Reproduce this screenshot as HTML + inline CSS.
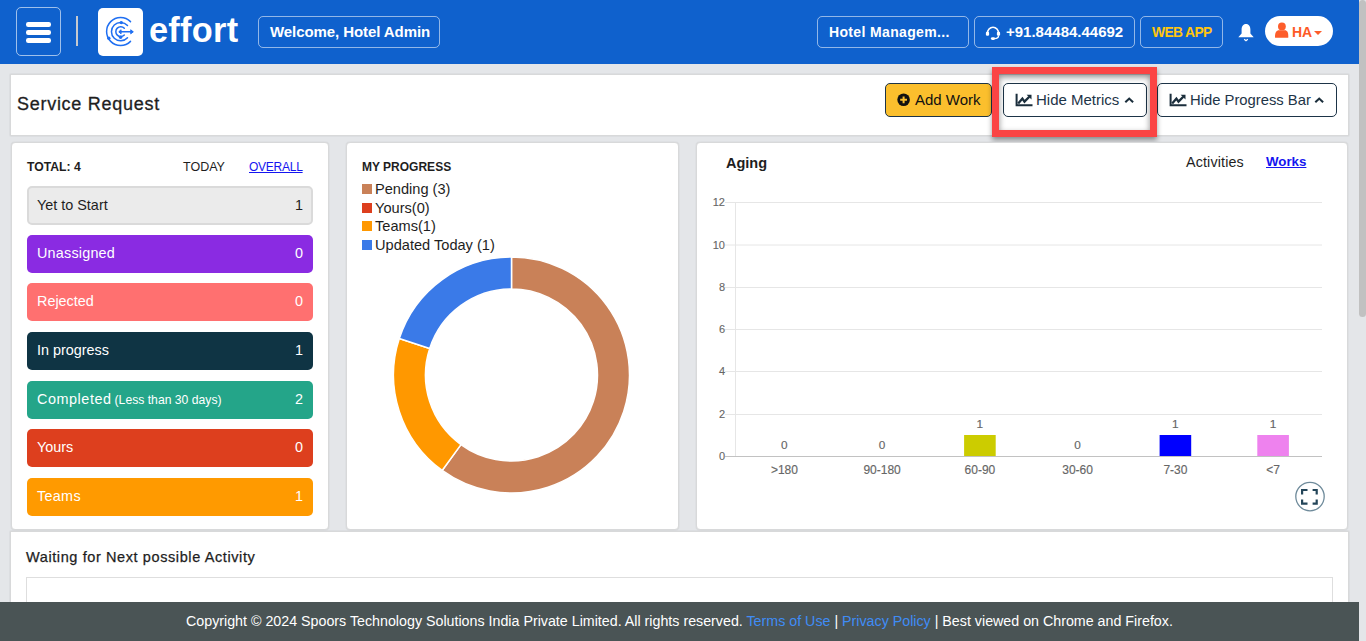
<!DOCTYPE html>
<html><head><meta charset="utf-8">
<style>
*{box-sizing:border-box;margin:0;padding:0}
html,body{width:1366px;height:641px;overflow:hidden;background:#e4e6e9;font-family:"Liberation Sans",sans-serif}
.abs{position:absolute}
.hdr{position:absolute;left:0;top:0;width:1359px;height:64px;background:#0f61cd}
.hbtn{position:absolute;border:1px solid rgba(255,255,255,.55);border-radius:5px;color:#fff;font-weight:700;white-space:nowrap}
.card{position:absolute;background:#fff;border:1px solid #d8d9da;border-radius:4px;box-shadow:0 0 1.5px rgba(0,0,0,.12)}
.bar{position:absolute;left:27px;width:286px;height:38px;border-radius:5px;color:#fff;font-size:14.4px;white-space:nowrap}
.bar .l{position:absolute;left:10px;top:9.8px}
.bar .r{position:absolute;right:10px;top:9.8px}
.sb{position:absolute;left:1359px;top:0;width:7px;height:641px;background:#e4e6e9}
.thumb{position:absolute;left:1359px;top:0;width:7px;height:317px;background:#c1c1c1;border-radius:4px}
.footer{position:absolute;left:0;top:602px;width:1359px;height:39px;background:#4a5455;color:#fff;font-size:14.26px;white-space:nowrap}
.ob{position:absolute;top:83px;height:34px;border:1px solid #1d3447;border-radius:5px;background:#fff;color:#1d3447;font-size:15px;white-space:nowrap}
</style></head><body>

<!-- HEADER -->
<div class="hdr"></div>
<div class="abs" style="left:16px;top:7px;width:45px;height:49px;border:1px solid rgba(255,255,255,.6);border-radius:5px"></div>
<div class="abs" style="left:26px;top:22px;width:25px;height:5px;background:#fff;border-radius:2.2px"></div>
<div class="abs" style="left:26px;top:30px;width:25px;height:5px;background:#fff;border-radius:2.2px"></div>
<div class="abs" style="left:26px;top:38px;width:25px;height:5px;background:#fff;border-radius:2.2px"></div>
<div class="abs" style="left:76px;top:16px;width:2px;height:30px;background:#c5c9cf"></div>
<div class="abs" style="left:98px;top:8px;width:45px;height:48px;background:#fff;border-radius:5px"></div>
<svg class="abs" style="left:98px;top:8px" width="45" height="48" viewBox="0 0 45 48" fill="none" stroke="#1f6ff2" stroke-width="1.5" stroke-linecap="round">
<path d="M32.5 13.6A14 14 0 1 0 32.5 33.4"/>
<path d="M29.5 17.5A9.2 9.2 0 1 0 29.5 29.8"/>
<path d="M26.3 20.3A4.9 4.9 0 1 0 26.3 27"/>
<path d="M21.8 23.8H34.6"/>
<path d="M22.8 22L20.8 23.8L22.8 25.6Z" fill="#1f6ff2" stroke-width="1"/>
<path d="M33 22L35.2 23.8L33 25.6Z" fill="#1f6ff2" stroke-width="1"/>
<circle cx="23.3" cy="14.6" r="1.7" fill="#1f6ff2" stroke="none"/>
<circle cx="22.6" cy="29.2" r="1.7" fill="#1f6ff2" stroke="none"/>
<circle cx="10.8" cy="30.2" r="1.7" fill="#1f6ff2" stroke="none"/>
</svg>
<svg class="abs" style="left:984px;top:24px" width="18" height="18" viewBox="0 0 18 18">
<path d="M3.4 9.6A5.6 6.4 0 0 1 14.6 9.6" fill="none" stroke="#fff" stroke-width="1.6"/>
<rect x="1.9" y="7.7" width="3.2" height="4" rx="1.2" fill="#fff"/>
<rect x="12.9" y="7.7" width="3.2" height="4" rx="1.2" fill="#fff"/>
<path d="M14.6 11.5Q14.6 14.6 10.5 14.6" fill="none" stroke="#fff" stroke-width="1.3"/>
<rect x="6.9" y="13.2" width="4.2" height="2.8" rx="1.4" fill="#fff"/>
</svg>
<svg class="abs" style="left:1237px;top:23px" width="18" height="19" viewBox="0 0 18 19">
<path d="M9 1C6 1 4.6 3.5 4.6 6.5V10.5L1.3 14.3H16.7L13.4 10.5V6.5C13.4 3.5 12 1 9 1Z" fill="#fff"/>
<path d="M7.2 16.3L9 17.8L10.8 16.3" fill="none" stroke="#fff" stroke-width="1.2"/>
</svg>
<div class="abs" style="left:149px;top:9.5px;font-size:34.3px;font-weight:700;color:#fff;line-height:40px;letter-spacing:.3px">effort</div>

<div class="hbtn" style="left:258px;top:16px;width:182px;height:32px;font-size:15px;line-height:30px;padding-left:11px;letter-spacing:-.08px">Welcome, Hotel Admin</div>
<div class="hbtn" style="left:817px;top:16px;width:152px;height:32px;font-size:14px;line-height:30px;padding-left:11px;letter-spacing:.35px">Hotel Managem...</div>
<div class="hbtn" style="left:974px;top:16px;width:161px;height:32px;font-size:15px;line-height:30px;padding-left:31px">+91.84484.44692</div>
<div class="hbtn" style="left:1140px;top:16px;width:83px;height:32px;font-size:13.8px;line-height:31px;padding-left:11px;letter-spacing:-.6px;color:#ffc60d">WEB APP</div>
<div class="abs" style="left:1265px;top:16px;width:68px;height:30px;background:#fff;border-radius:15px"></div>
<div class="abs" style="left:1292px;top:22px;font-size:14px;font-weight:700;color:#fd5a26;line-height:20px">HA</div>
<svg class="abs" style="left:1274px;top:22px" width="16" height="17" viewBox="0 0 16 17">
<circle cx="7.9" cy="4.4" r="3.9" fill="#fd5d2b"/>
<path d="M1 14.5C1 10.5 2.5 8.3 5 8.3H10.8C13.3 8.3 14.3 10.5 14.3 14.5V15.2Q14.3 15.8 13.5 15.8H1.8Q1 15.8 1 15.2Z" fill="#fd5d2b"/>
</svg>
<svg class="abs" style="left:1313px;top:30px" width="10" height="6" viewBox="0 0 10 6"><path d="M1 1H9L5 5Z" fill="#fd5d2b"/></svg>


<!-- TITLE CARD -->
<div class="card" style="left:10px;top:74px;width:1339px;height:62px;border-radius:0"></div>
<div class="abs" style="left:17px;top:93px;font-size:18px;color:#1e1e1e;letter-spacing:.72px;line-height:22px;-webkit-text-stroke:.3px #1e1e1e">Service Request</div>
<div class="ob" style="left:885px;width:107px;background:#fbbf2d;line-height:32px;padding-left:29px;color:#111">Add Work</div>
<div class="ob" style="left:1003px;width:144px;line-height:32px;padding-left:32px">Hide Metrics</div>
<div class="ob" style="left:1157px;width:180px;line-height:32px;padding-left:32px;font-size:14.8px">Hide Progress Bar</div>
<svg class="abs" style="left:896px;top:93px" width="15" height="15" viewBox="0 0 15 15">
<circle cx="7.6" cy="6.8" r="6.3" fill="#111"/>
<path d="M4.2 6.8H11M7.6 3.4V10.2" stroke="#fbbf2d" stroke-width="2"/>
</svg>
<svg class="abs" style="left:1014px;top:92px" width="20" height="16" viewBox="0 0 20 16" fill="none" stroke="#1b2e3c">
<path d="M2.6 1.8V13.2H18.5" stroke-width="2"/>
<path d="M4.2 11.6L8.4 6.6L10.5 9.6L15.3 4.7" stroke-width="2.3" stroke-linejoin="miter"/>
<path d="M12.6 2.7H17.5V7.6Z" fill="#1b2e3c" stroke="none"/>
</svg>
<svg class="abs" style="left:1123px;top:96px" width="12" height="8" viewBox="0 0 12 8"><path d="M2.3 6.3L6.2 2.6L10.1 6.3" fill="none" stroke="#1b2e3c" stroke-width="2.1"/></svg>
<svg class="abs" style="left:1168px;top:92px" width="20" height="16" viewBox="0 0 20 16" fill="none" stroke="#1b2e3c">
<path d="M2.6 1.8V13.2H18.5" stroke-width="2"/>
<path d="M4.2 11.6L8.4 6.6L10.5 9.6L15.3 4.7" stroke-width="2.3" stroke-linejoin="miter"/>
<path d="M12.6 2.7H17.5V7.6Z" fill="#1b2e3c" stroke="none"/>
</svg>
<svg class="abs" style="left:1313px;top:96px" width="12" height="8" viewBox="0 0 12 8"><path d="M2.3 6.3L6.2 2.6L10.1 6.3" fill="none" stroke="#1b2e3c" stroke-width="2.1"/></svg>
<div class="abs" style="left:992px;top:67px;width:165px;height:70px;border:7px solid #fb4444;box-shadow:0 3px 5px rgba(0,0,0,.4), inset 0 3px 6px rgba(0,0,0,.45)"></div>

<!-- CARD 1 -->
<div class="card" style="left:11px;top:142px;width:318px;height:388px"></div>
<div class="abs" style="left:27px;top:160px;font-size:12.2px;font-weight:700;color:#1e1e1e;line-height:15px">TOTAL: 4</div>
<div class="abs" style="left:183px;top:160px;font-size:12.5px;color:#1e1e1e;line-height:15px">TODAY</div>
<div class="abs" style="left:249px;top:160px;font-size:12px;letter-spacing:-.25px;color:#1515f0;line-height:15px;text-decoration:underline">OVERALL</div>
<div class="bar" style="top:186px;height:38.8px;background:#ebebeb;border:2px solid #dadada;color:#1e1e1e"><span class="l" style="left:8px;top:8.6px">Yet to Start</span><span class="r" style="right:8px;top:8.6px">1</span></div>
<div class="bar" style="top:235px;background:#8a2be2"><span class="l" style="letter-spacing:.2px">Unassigned</span><span class="r">0</span></div>
<div class="bar" style="top:283px;background:#ff7070"><span class="l">Rejected</span><span class="r">0</span></div>
<div class="bar" style="top:332px;background:#0f3444"><span class="l">In progress</span><span class="r">1</span></div>
<div class="bar" style="top:381px;background:#24a589"><span class="l"><span style="letter-spacing:.55px">Completed</span> <span style="font-size:12.2px;margin-left:-1px">(Less than 30 days)</span></span><span class="r">2</span></div>
<div class="bar" style="top:429px;background:#dd3f1e"><span class="l">Yours</span><span class="r">0</span></div>
<div class="bar" style="top:478px;background:#ff9a00"><span class="l" style="letter-spacing:.3px">Teams</span><span class="r">1</span></div>

<!-- CARD 2 -->
<div class="card" style="left:346px;top:142px;width:333px;height:388px"></div>

<div class="abs" style="left:362px;top:160px;font-size:12px;font-weight:700;color:#1e1e1e;line-height:14px">MY PROGRESS</div>
<div class="abs" style="left:362px;top:184px;width:10px;height:10px;background:#c98158"></div>
<div class="abs" style="left:362px;top:203px;width:10px;height:10px;background:#dd3f1e"></div>
<div class="abs" style="left:362px;top:221px;width:10px;height:10px;background:#ff9800"></div>
<div class="abs" style="left:362px;top:240px;width:10px;height:10px;background:#3a7ae8"></div>
<div class="abs" style="left:375px;top:181px;font-size:14.6px;color:#1e1e1e;line-height:16px">Pending (3)</div>
<div class="abs" style="left:375px;top:200px;font-size:14.6px;color:#1e1e1e;line-height:16px">Yours(0)</div>
<div class="abs" style="left:375px;top:218px;font-size:14.6px;color:#1e1e1e;line-height:16px">Teams(1)</div>
<div class="abs" style="left:375px;top:237px;font-size:14.6px;color:#1e1e1e;line-height:16px">Updated Today (1)</div>
<svg class="abs" style="left:0;top:0" width="700" height="520">
<path d="M511.50 257.00A118 118 0 1 1 442.14 470.46L460.95 444.58A86 86 0 1 0 511.50 289.00Z" fill="#c98158" stroke="#fff" stroke-width="1.5" stroke-linejoin="round"/>
<path d="M442.14 470.46A118 118 0 0 1 399.28 338.54L429.71 348.42A86 86 0 0 0 460.95 444.58Z" fill="#ff9800" stroke="#fff" stroke-width="1.5" stroke-linejoin="round"/>
<path d="M399.28 338.54A118 118 0 0 1 511.50 257.00L511.50 289.00A86 86 0 0 0 429.71 348.42Z" fill="#3a7ae8" stroke="#fff" stroke-width="1.5" stroke-linejoin="round"/>
</svg>
<!-- CARD 3 -->
<div class="card" style="left:696px;top:142px;width:652px;height:388px"></div>

<div class="abs" style="left:726px;top:155px;font-size:14.5px;font-weight:700;color:#1e1e1e;line-height:17px">Aging</div>
<div class="abs" style="left:1186px;top:154px;font-size:14.3px;color:#1e1e1e;line-height:16px;letter-spacing:.15px">Activities</div>
<div class="abs" style="left:1266px;top:154px;font-size:13.3px;font-weight:700;color:#1515f0;line-height:16px;text-decoration:underline">Works</div>
<svg class="abs" style="left:0;top:0" width="1366" height="641" font-family="Liberation Sans" >
<line x1="725" y1="202.5" x2="1322" y2="202.5" stroke="#e6e6e6" stroke-width="1"/>
<text x="725" y="206.0" text-anchor="end" font-size="11" fill="#666" stroke="#666" stroke-width=".12">12</text>
<line x1="725" y1="245" x2="1322" y2="245" stroke="#e6e6e6" stroke-width="1"/>
<text x="725" y="248.5" text-anchor="end" font-size="11" fill="#666" stroke="#666" stroke-width=".12">10</text>
<line x1="725" y1="287.5" x2="1322" y2="287.5" stroke="#e6e6e6" stroke-width="1"/>
<text x="725" y="291.0" text-anchor="end" font-size="11" fill="#666" stroke="#666" stroke-width=".12">8</text>
<line x1="725" y1="329.5" x2="1322" y2="329.5" stroke="#e6e6e6" stroke-width="1"/>
<text x="725" y="333.0" text-anchor="end" font-size="11" fill="#666" stroke="#666" stroke-width=".12">6</text>
<line x1="725" y1="371.5" x2="1322" y2="371.5" stroke="#e6e6e6" stroke-width="1"/>
<text x="725" y="375.0" text-anchor="end" font-size="11" fill="#666" stroke="#666" stroke-width=".12">4</text>
<line x1="725" y1="414.5" x2="1322" y2="414.5" stroke="#e6e6e6" stroke-width="1"/>
<text x="725" y="418.0" text-anchor="end" font-size="11" fill="#666" stroke="#666" stroke-width=".12">2</text>
<text x="725" y="459.5" text-anchor="end" font-size="11" fill="#666" stroke="#666" stroke-width=".12">0</text>
<line x1="735.5" y1="202" x2="735.5" y2="456" stroke="#e6e6e6" stroke-width="1"/>
<text x="784.4" y="449" text-anchor="middle" font-size="11.8" fill="#666" stroke="#666" stroke-width=".15">0</text>
<text x="784.4" y="474" text-anchor="middle" font-size="12" fill="#666" stroke="#666" stroke-width=".15">&gt;180</text>
<text x="882.1" y="449" text-anchor="middle" font-size="11.8" fill="#666" stroke="#666" stroke-width=".15">0</text>
<text x="882.1" y="474" text-anchor="middle" font-size="12" fill="#666" stroke="#666" stroke-width=".15">90-180</text>
<rect x="964.1" y="435" width="31.6" height="21.2" fill="#cccc00"/>
<text x="979.9" y="428" text-anchor="middle" font-size="11.8" fill="#666" stroke="#666" stroke-width=".15">1</text>
<text x="979.9" y="474" text-anchor="middle" font-size="12" fill="#666" stroke="#666" stroke-width=".15">60-90</text>
<text x="1077.6" y="449" text-anchor="middle" font-size="11.8" fill="#666" stroke="#666" stroke-width=".15">0</text>
<text x="1077.6" y="474" text-anchor="middle" font-size="12" fill="#666" stroke="#666" stroke-width=".15">30-60</text>
<rect x="1159.6" y="435" width="31.6" height="21.2" fill="#0000ff"/>
<text x="1175.4" y="428" text-anchor="middle" font-size="11.8" fill="#666" stroke="#666" stroke-width=".15">1</text>
<text x="1175.4" y="474" text-anchor="middle" font-size="12" fill="#666" stroke="#666" stroke-width=".15">7-30</text>
<rect x="1257.3" y="435" width="31.6" height="21.2" fill="#ee82ee"/>
<text x="1273.1" y="428" text-anchor="middle" font-size="11.8" fill="#666" stroke="#666" stroke-width=".15">1</text>
<text x="1273.1" y="474" text-anchor="middle" font-size="12" fill="#666" stroke="#666" stroke-width=".15">&lt;7</text>
<line x1="725" y1="456.5" x2="1322" y2="456.5" stroke="#c2c2c2" stroke-width="1"/>
<circle cx="1310" cy="496.6" r="14.2" fill="#fff" stroke="#6f8b9b" stroke-width="1.3"/>
<path d="M1302.1 494.6V490H1307.5M1312.6 490H1316.7V494.6M1316.7 499.4V503.7H1312.6M1307.5 503.7H1302.1V499.4" fill="none" stroke="#234559" stroke-width="2.2"/>
</svg>
<!-- BOTTOM CARD -->
<div class="card" style="left:10px;top:531px;width:1339px;height:120px;border-radius:0"></div>
<div class="abs" style="left:26px;top:547.4px;font-size:14.5px;letter-spacing:.6px;color:#1e1e1e;line-height:20px;-webkit-text-stroke:.25px #1e1e1e">Waiting for Next possible Activity</div>
<div class="abs" style="left:26px;top:577px;width:1307px;height:40px;border:1px solid #dedede;background:#fff"></div>

<!-- FOOTER -->
<div class="footer"><div class="abs" style="left:186px;top:11px;line-height:17px">Copyright © 2024 Spoors Technology Solutions India Private Limited. All rights reserved. <span style="color:#3f8cf5">Terms of Use</span> | <span style="color:#3f8cf5">Privacy Policy</span> | Best viewed on Chrome and Firefox.</div></div>

<!-- SCROLLBAR -->
<div class="sb"></div>
<div class="thumb"></div>
</body></html>
